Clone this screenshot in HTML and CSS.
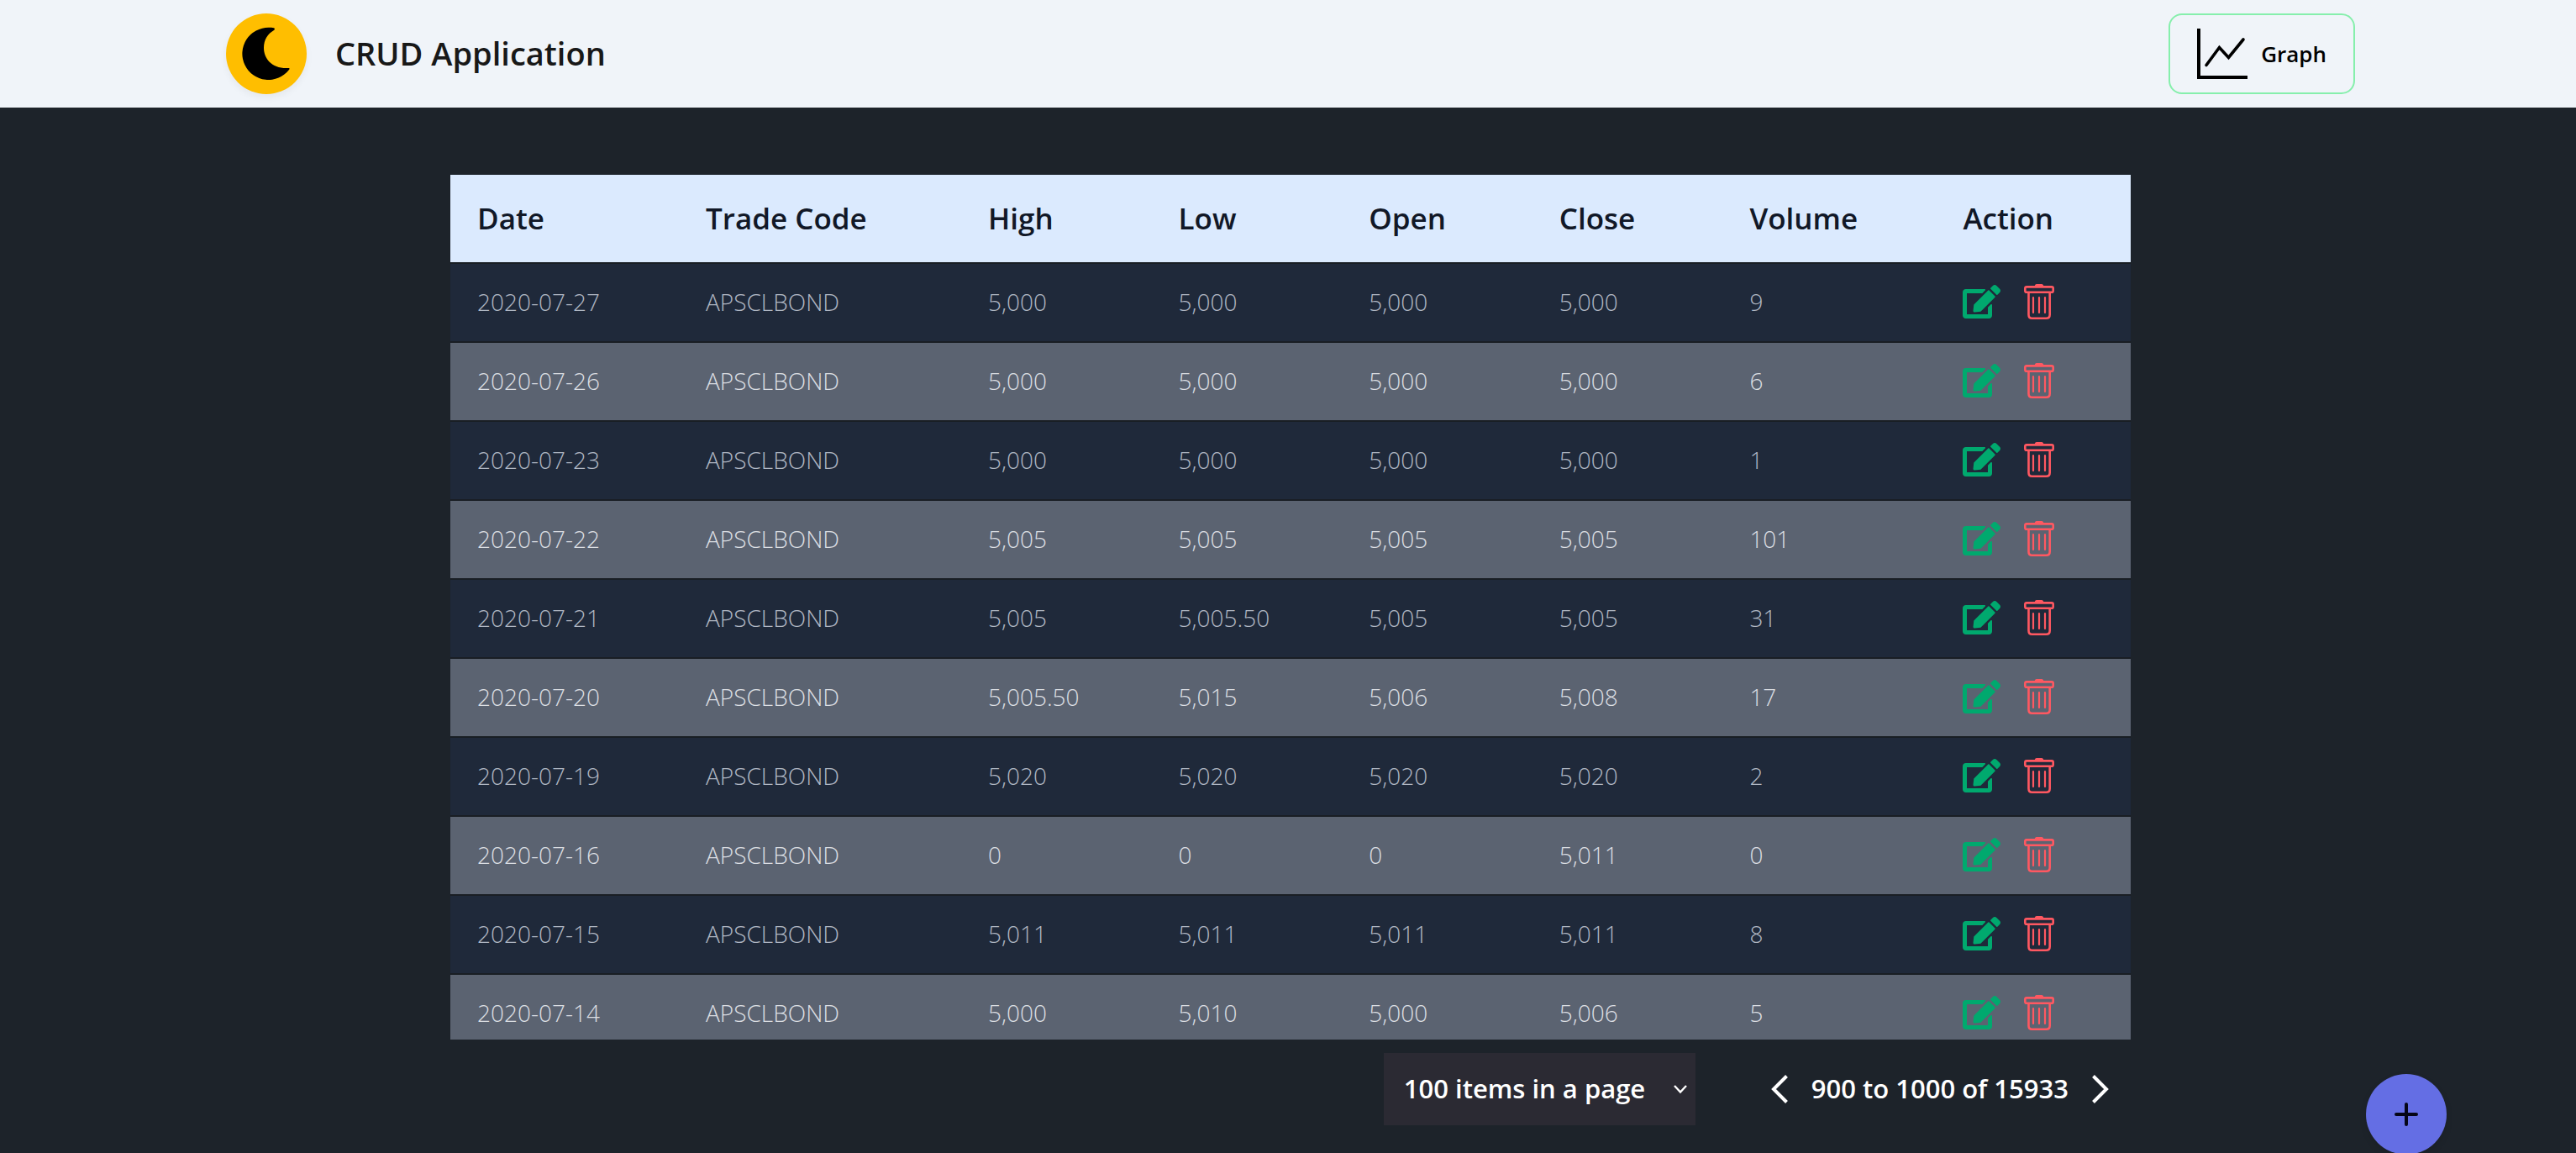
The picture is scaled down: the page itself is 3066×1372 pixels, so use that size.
FILE: index.html
```html
<!DOCTYPE html>
<html lang="en">
<head>
<meta charset="utf-8">
<meta name="viewport" content="width=device-width, initial-scale=1">
<title>CRUD Application</title>
<link rel="stylesheet" href="styles.css">
</head>
<body>
<svg class="sprite" aria-hidden="true">
  <symbol id="edit" viewBox="0 0 576 512"><path fill="currentColor" d="M402.6 83.2l90.2 90.2c3.8 3.8 3.8 10 0 13.8L274.4 405.6l-92.8 10.3c-12.4 1.4-22.9-9.1-21.5-21.5l10.3-92.8L388.8 83.2c3.8-3.8 10-3.8 13.8 0zm162-22.9l-48.8-48.8c-15.2-15.2-39.9-15.2-55.2 0l-35.4 35.4c-3.8 3.8-3.8 10 0 13.8l90.2 90.2c3.8 3.8 10 3.8 13.8 0l35.4-35.4c15.2-15.3 15.2-40 0-55.2zM384 346.2V448H64V128h229.8c3.2 0 6.2-1.3 8.5-3.5l40-40c7.6-7.6 2.2-20.5-8.5-20.5H48C21.5 64 0 85.5 0 112v352c0 26.5 21.5 48 48 48h352c26.5 0 48-21.5 48-48V306.2c0-10.7-12.9-16-20.5-8.5l-40 40c-2.2 2.3-3.5 5.3-3.5 8.5z"/></symbol>
  <symbol id="trash" viewBox="0 0 36 42"><g fill="none" stroke="currentColor"><path stroke-width="2.6" d="M3 3.4H33Q34.7 3.4 34.7 5V8Q34.7 9.8 33 9.8H3Q1.3 9.8 1.3 8V5Q1.3 3.4 3 3.4Z"/><path stroke-width="2.6" d="M5.500 10V36.500Q5.500 40.700 9.500 40.700H26.500Q30.700 40.700 30.700 36.500V10"/><path stroke-width="2.200" stroke-linecap="round" d="M11 16V34M18 16V34M25 16V34"/></g><path fill="currentColor" d="M12.500 3Q13 0 15 0H21Q23 0 23.500 3Z"/></symbol>
</svg>

<header class="topbar">
  <div class="topbar-inner">
    <div class="brand">
      <button class="theme" type="button" aria-label="Toggle theme">
        <svg class="moon" viewBox="0 0 60 64" aria-hidden="true"><path d="M39 1.300C37 .9 35 .8 33 .8A31.100 31.100 0 1 0 57 51C58 50 58 49 56 49C37 50 27 38 27 25C27 15 32 8 39 4C40.500 3 40 1.500 39 1.300Z"/></svg>
      </button>
      <h1 class="title">CRUD Application</h1>
    </div>
    <button class="graph" type="button">
      <svg class="graph-icon" viewBox="0 0 60 60" fill="none" stroke="currentColor" stroke-width="4" aria-hidden="true"><path d="M2 0V58H60"/><path stroke-width="3.600" stroke-linecap="round" d="M11 43.500L26.500 22.500L37.500 34.500L55 13"/></svg>
      Graph
    </button>
  </div>
</header>

<main class="content">
  <div class="scroller">
    <table class="trades">
      <colgroup><col class="c-date"><col class="c-code"><col class="c-num"><col class="c-num"><col class="c-num"><col class="c-num"><col class="c-volume"><col></colgroup>
      <thead>
        <tr><th>Date</th><th>Trade Code</th><th>High</th><th>Low</th><th>Open</th><th>Close</th><th>Volume</th><th>Action</th></tr>
      </thead>
      <tbody>
        <tr><td>2020-07-27</td><td>APSCLBOND</td><td>5,000</td><td>5,000</td><td>5,000</td><td>5,000</td><td>9</td><td><div class="actions"><button class="edit" type="button" aria-label="Edit"><svg><use href="#edit"/></svg></button><button class="trash" type="button" aria-label="Delete"><svg><use href="#trash"/></svg></button></div></td></tr>
        <tr><td>2020-07-26</td><td>APSCLBOND</td><td>5,000</td><td>5,000</td><td>5,000</td><td>5,000</td><td>6</td><td><div class="actions"><button class="edit" type="button" aria-label="Edit"><svg><use href="#edit"/></svg></button><button class="trash" type="button" aria-label="Delete"><svg><use href="#trash"/></svg></button></div></td></tr>
        <tr><td>2020-07-23</td><td>APSCLBOND</td><td>5,000</td><td>5,000</td><td>5,000</td><td>5,000</td><td>1</td><td><div class="actions"><button class="edit" type="button" aria-label="Edit"><svg><use href="#edit"/></svg></button><button class="trash" type="button" aria-label="Delete"><svg><use href="#trash"/></svg></button></div></td></tr>
        <tr><td>2020-07-22</td><td>APSCLBOND</td><td>5,005</td><td>5,005</td><td>5,005</td><td>5,005</td><td>101</td><td><div class="actions"><button class="edit" type="button" aria-label="Edit"><svg><use href="#edit"/></svg></button><button class="trash" type="button" aria-label="Delete"><svg><use href="#trash"/></svg></button></div></td></tr>
        <tr><td>2020-07-21</td><td>APSCLBOND</td><td>5,005</td><td>5,005.50</td><td>5,005</td><td>5,005</td><td>31</td><td><div class="actions"><button class="edit" type="button" aria-label="Edit"><svg><use href="#edit"/></svg></button><button class="trash" type="button" aria-label="Delete"><svg><use href="#trash"/></svg></button></div></td></tr>
        <tr><td>2020-07-20</td><td>APSCLBOND</td><td>5,005.50</td><td>5,015</td><td>5,006</td><td>5,008</td><td>17</td><td><div class="actions"><button class="edit" type="button" aria-label="Edit"><svg><use href="#edit"/></svg></button><button class="trash" type="button" aria-label="Delete"><svg><use href="#trash"/></svg></button></div></td></tr>
        <tr><td>2020-07-19</td><td>APSCLBOND</td><td>5,020</td><td>5,020</td><td>5,020</td><td>5,020</td><td>2</td><td><div class="actions"><button class="edit" type="button" aria-label="Edit"><svg><use href="#edit"/></svg></button><button class="trash" type="button" aria-label="Delete"><svg><use href="#trash"/></svg></button></div></td></tr>
        <tr><td>2020-07-16</td><td>APSCLBOND</td><td>0</td><td>0</td><td>0</td><td>5,011</td><td>0</td><td><div class="actions"><button class="edit" type="button" aria-label="Edit"><svg><use href="#edit"/></svg></button><button class="trash" type="button" aria-label="Delete"><svg><use href="#trash"/></svg></button></div></td></tr>
        <tr><td>2020-07-15</td><td>APSCLBOND</td><td>5,011</td><td>5,011</td><td>5,011</td><td>5,011</td><td>8</td><td><div class="actions"><button class="edit" type="button" aria-label="Edit"><svg><use href="#edit"/></svg></button><button class="trash" type="button" aria-label="Delete"><svg><use href="#trash"/></svg></button></div></td></tr>
        <tr><td>2020-07-14</td><td>APSCLBOND</td><td>5,000</td><td>5,010</td><td>5,000</td><td>5,006</td><td>5</td><td><div class="actions"><button class="edit" type="button" aria-label="Edit"><svg><use href="#edit"/></svg></button><button class="trash" type="button" aria-label="Delete"><svg><use href="#trash"/></svg></button></div></td></tr>
      </tbody>
    </table>
  </div>

  <div class="footer">
    <div class="page-size">
      <select aria-label="Items in a page"><option>100 items in a page</option></select>
      <svg class="caret" viewBox="0 0 16 12" fill="none" stroke="currentColor" stroke-width="2.400" aria-hidden="true"><path d="M1 2L8 9.500L15 2"/></svg>
    </div>
    <nav class="pager" aria-label="Pages">
      <button type="button" aria-label="Previous page"><svg viewBox="0 0 20 34" fill="none" stroke="currentColor" stroke-width="4"><path d="M18.500 1.500L3 17L18.500 32.500"/></svg></button>
      <span class="range">900 to 1000 of 15933</span>
      <button type="button" aria-label="Next page"><svg viewBox="0 0 20 34" fill="none" stroke="currentColor" stroke-width="4"><path d="M1.500 1.500L17 17L1.500 32.500"/></svg></button>
    </nav>
  </div>
</main>

<button class="add" type="button" aria-label="Add">
  <svg viewBox="0 0 28 28" fill="none" stroke="currentColor" stroke-width="4" stroke-linecap="round"><path d="M14 2V26M2 14H26"/></svg>
</button>
</body>
</html>
```
FILE: styles.css
```css
* {
  box-sizing: border-box;
}

body {
  margin: 0;
  min-height: 100vh;
  overflow: hidden;
  background: #1d232a;
  color: #fff;
  font-family: "Open Sans", "Noto Sans", sans-serif;
  font-size: 28px;
}

button,
select {
  font: inherit;
  cursor: pointer;
}

button {
  display: flex;
  align-items: center;
  justify-content: center;
  padding: 0;
  border: 0;
  background: none;
  color: inherit;
}

.sprite {
  display: none;
}

.topbar {
  padding: 16px 0 16px 6px;
  background: #f0f4f9;
  color: #181818;
}

.topbar-inner {
  display: flex;
  align-items: center;
  justify-content: space-between;
  max-width: 2534px;
  margin: 0 auto;
}

.brand {
  display: flex;
  align-items: center;
  gap: 34px;
}

.theme {
  width: 96px;
  height: 96px;
  border-radius: 50%;
  background: #ffbe00;
  color: #000;
  box-shadow: 0 4px 8px rgba(0, 0, 0, 0.05);
}

.moon {
  width: 60px;
  height: 64px;
}

.title {
  margin: 0;
  padding-bottom: 2px;
  font-size: 38px;
  line-height: 56px;
  font-weight: 600;
}

.graph {
  gap: 16px;
  height: 96px;
  padding: 0 32px;
  border: 2px solid #86efac;
  border-radius: 16px;
  color: #000;
  font-size: 26px;
  font-weight: 600;
}

.graph-icon {
  width: 60px;
  height: 60px;
}

.content {
  padding: 80px 0 0 6px;
}

.scroller {
  max-width: 2000px;
  height: 75vh;
  margin: 0 auto;
  overflow: auto;
  scrollbar-width: none;
}

.trades {
  width: 100%;
  table-layout: fixed;
  border-collapse: separate;
  border-spacing: 0;
  text-align: left;
}

.c-date {
  width: 13.6%;
}

.c-code {
  width: 16.8%;
}

.c-num {
  width: 11.33%;
}

.c-volume {
  width: 12.7%;
}

.trades th,
.trades td {
  padding: 0 32px 2px;
  border-bottom: 2px solid #191e24;
}

.trades th {
  height: 106px;
  background: #dbeafe;
  color: #111827;
  font-size: 35px;
  font-weight: 600;
}

.trades td {
  height: 94px;
  background: #1f293a;
  color: #b0b7c3;
  font-size: 28px;
  font-weight: 300;
}

.trades tr:nth-child(even) td {
  background: #5b6371;
  color: #dcdfe3;
}

.actions {
  display: flex;
  align-items: center;
  gap: 28px;
}

.actions svg {
  display: block;
}

.edit {
  color: #00a96e;
}

.edit svg {
  width: 45px;
  height: 40px;
}

.trash {
  color: #ff5861;
}

.trash svg {
  width: 36px;
  height: 42px;
}

.footer {
  display: flex;
  align-items: center;
  justify-content: flex-end;
  gap: 90px;
  max-width: 2000px;
  margin: 16px auto 0;
  padding-right: 26px;
  font-size: 31px;
  font-weight: 600;
}

.page-size {
  display: grid;
  align-items: center;
}

.page-size select {
  grid-area: 1 / 1;
  width: 371px;
  height: 86px;
  padding: 0 24px 2px;
  border: 0;
  appearance: none;
  background: #2b2a33;
  color: #fff;
}

.caret {
  grid-area: 1 / 1;
  justify-self: end;
  width: 16px;
  height: 12px;
  margin-right: 10px;
  pointer-events: none;
}

.pager {
  display: flex;
  align-items: center;
  gap: 28px;
}

.range {
  padding-bottom: 2px;
}

.pager svg {
  width: 20px;
  height: 34px;
}

.add {
  position: fixed;
  right: 154px;
  bottom: -2px;
  width: 96px;
  height: 96px;
  border-radius: 50%;
  background: #646ee4;
  color: #050617;
  box-shadow: 0 4px 8px rgba(0, 0, 0, 0.1);
}

.add svg {
  width: 28px;
  height: 28px;
}
```
